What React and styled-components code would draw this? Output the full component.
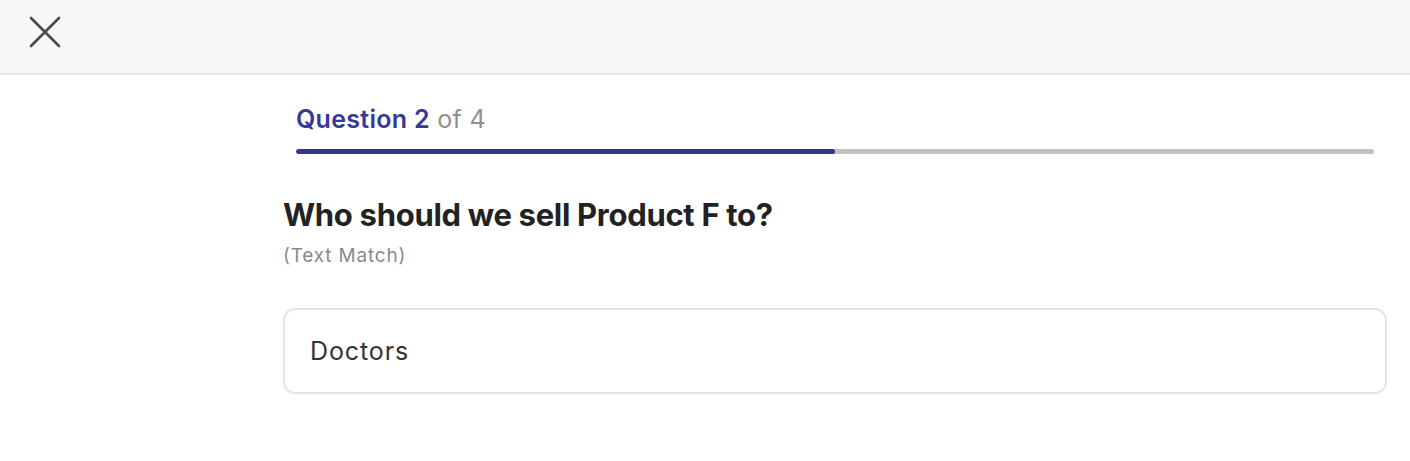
import React from 'react';
import styled, { createGlobalStyle } from 'styled-components';

const GlobalStyle = createGlobalStyle`
  html, body {
    margin: 0;
    padding: 0;
    background: #ffffff;
    font-family: Inter, "Liberation Sans", Arial, sans-serif;
    -webkit-font-smoothing: antialiased;
  }
`;

const question = {
  index: 2,
  total: 4,
  title: 'Who should we sell Product F to?',
  kind: 'Text Match',
  answer: 'Doctors',
};

const App = () => (
  <>
    <GlobalStyle />
    <Page>
      <TopBar>
        <CloseButton aria-label="Close">
          <svg width="32" height="32" viewBox="0 0 32 32">
            <path
              d="M2 2 L30 30 M30 2 L2 30"
              stroke="#4a4a4a"
              strokeWidth="2.6"
              strokeLinecap="round"
            />
          </svg>
        </CloseButton>
      </TopBar>

      <Content>
        <Progress>
          <StepLabel>
            <strong>Question {question.index}</strong> of {question.total}
          </StepLabel>
          <Track>
            <Fill style={{ width: `${(question.index / question.total) * 100}%` }} />
          </Track>
        </Progress>

        <Title>{question.title}</Title>
        <Kind>({question.kind})</Kind>

        <AnswerBox>{question.answer}</AnswerBox>
      </Content>
    </Page>
  </>
);

export default App;

const Page = styled.div`
  width: 1410px;
  height: 461px;
  overflow: hidden;
  background: #ffffff;
`;

const TopBar = styled.header`
  display: flex;
  align-items: center;
  height: 73px;
  padding: 0 0 0 29px;
  background: #f8f8f8;
  border-bottom: 2px solid #e6e6e6;
  box-sizing: content-box;
`;

const CloseButton = styled.button`
  display: flex;
  align-items: center;
  justify-content: center;
  padding: 0;
  margin-top: -10px;
  border: none;
  background: none;
  cursor: pointer;
`;

const Content = styled.main`
  display: flex;
  flex-direction: column;
  margin: 0 23px 0 283px;
`;

const Progress = styled.section`
  display: flex;
  flex-direction: column;
  padding: 28px 13px 0 13px;
`;

const StepLabel = styled.div`
  font-size: 25px;
  line-height: 32px;
  color: #8f8f8f;
  letter-spacing: 0.3px;

  strong {
    font-weight: 600;
    color: #38379a;
  }
`;

const Track = styled.div`
  margin-top: 14px;
  height: 5px;
  border-radius: 3px;
  background: #c2c2c2;
  overflow: hidden;
`;

const Fill = styled.div`
  height: 100%;
  background: #34348f;
  border-radius: 3px;
`;

const Title = styled.h1`
  margin: 42px 0 0 0;
  font-size: 31px;
  line-height: 38px;
  font-weight: 700;
  color: #222222;
  letter-spacing: -0.3px;
`;

const Kind = styled.div`
  margin-top: 10px;
  font-size: 19px;
  line-height: 24px;
  color: #8a8a8a;
  letter-spacing: 0.8px;
`;

const AnswerBox = styled.div`
  display: flex;
  align-items: center;
  margin-top: 40px;
  height: 82px;
  padding: 0 25px;
  border: 2px solid #e4e4e4;
  border-radius: 12px;
  font-size: 25px;
  color: #333333;
  letter-spacing: 0.9px;
`;
